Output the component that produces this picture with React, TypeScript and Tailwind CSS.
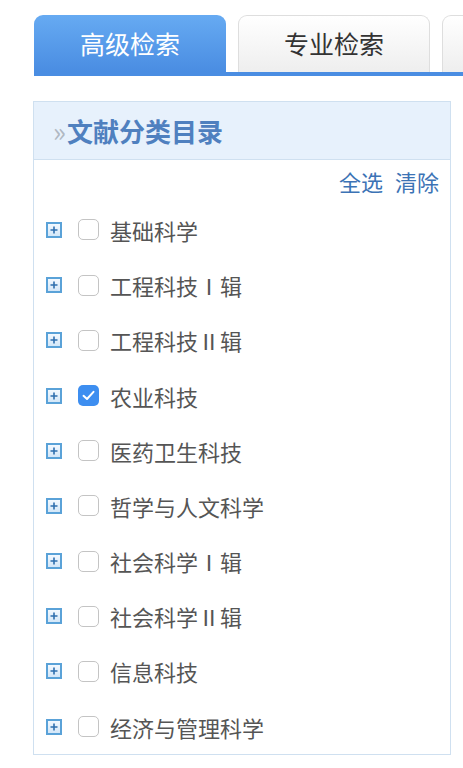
import React from "react";

const items = [
  "基础科学",
  "工程科技Ⅰ辑",
  "工程科技Ⅱ辑",
  "农业科技",
  "医药卫生科技",
  "哲学与人文科学",
  "社会科学Ⅰ辑",
  "社会科学Ⅱ辑",
  "信息科技",
  "经济与管理科学",
];

const font = { fontFamily: '"Noto Sans CJK SC", "Noto Sans", sans-serif' };

function PlusBox() {
  return (
    <div className="w-[16px] h-[16px] border-2 border-[#5aa2d8] bg-gradient-to-b from-[#f3f9ff] to-[#d4e7f8] flex items-center justify-center shrink-0">
      <svg width="8" height="8" viewBox="0 0 8 8">
        <path d="M4 0.5V7.5M0.5 4H7.5" stroke="#2f6fae" strokeWidth="1.6" />
      </svg>
    </div>
  );
}

function Check({ checked }: { checked: boolean }) {
  if (checked) {
    return (
      <div className="w-[21px] h-[21px] rounded-[5px] bg-[#3d8ef0] flex items-center justify-center shrink-0">
        <svg width="13" height="11" viewBox="0 0 13 11">
          <path d="M1.5 5.8L5 9L11.5 1.8" fill="none" stroke="#fff" strokeWidth="2" strokeLinecap="round" strokeLinejoin="round" />
        </svg>
      </div>
    );
  }
  return <div className="w-[21px] h-[21px] rounded-[5px] border border-[#c4c4c4] bg-white shrink-0" />;
}

export default function App() {
  return (
    <div className="w-[463px] h-[768px] bg-white overflow-hidden" style={font}>
      <div className="pt-[15px] pl-[34px]">
        <div className="flex gap-[12px] items-end w-[600px]">
          <div className="w-[194px] h-[57px] rounded-t-[9px] bg-gradient-to-b from-[#66aaf2] to-[#4a8de2] flex items-center justify-center text-white text-[25px]">
            高级检索
          </div>
          <div className="w-[194px] h-[57px] rounded-t-[9px] border border-b-0 border-[#dedede] bg-gradient-to-b from-[#ffffff] to-[#eeeeee] flex items-center justify-center text-[#333] text-[25px]">
            专业检索
          </div>
          <div className="w-[194px] h-[57px] rounded-t-[9px] border border-b-0 border-[#dedede] bg-gradient-to-b from-[#ffffff] to-[#eeeeee]" />
        </div>
        <div className="h-[4px] bg-[#4a8de2] w-[600px]" />
      </div>

      <div className="ml-[33px] mt-[25px] w-[418px] border border-[#cfe0f0]">
        <div className="h-[58px] bg-[#e7f1fc] border-b border-[#cfe0f0] flex items-center pl-[19px]">
          <span className="text-[#b0b8c2] text-[27px] leading-none mr-[1px]">»</span>
          <span className="text-[#4f80bf] text-[26px] font-bold leading-none">文献分类目录</span>
        </div>
        <div className="h-[42.4px] flex items-center justify-end pr-[11px] gap-[12px] text-[#3c73b5] text-[22px]">
          <span>全选</span>
          <span>清除</span>
        </div>
        {items.map((t, i) => (
          <div key={t} className="h-[55.2px] flex items-center pl-[12px]">
            <PlusBox />
            <div className="ml-[16px]">
              <Check checked={i === 3} />
            </div>
            <span className="ml-[11px] text-[#555] text-[22px] leading-none">{t}</span>
          </div>
        ))}
      </div>
    </div>
  );
}
